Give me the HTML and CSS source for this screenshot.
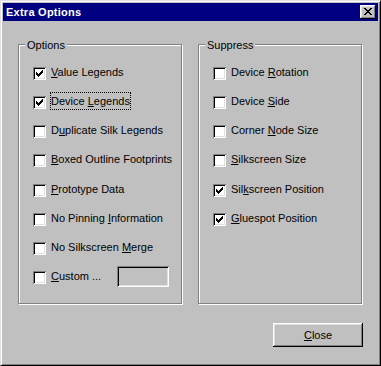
FILE: index.html
```html
<!DOCTYPE html>
<html>
<head>
<meta charset="utf-8">
<link rel="stylesheet" href="styles.css">
</head>
<body>
<div class="window">
  <div class="titlebar">
    <span class="title">Extra Options</span>
    <span class="cap-btn"><svg width="8" height="7" viewBox="0 0 8 7" shape-rendering="crispEdges"><path d="M0 0h2v1h-2z M6 0h2v1h-2z M1 1h2v1h-2z M5 1h2v1h-2z M2 2h4v1h-4z M3 3h2v1h-2z M2 4h4v1h-4z M1 5h2v1h-2z M5 5h2v1h-2z M0 6h2v1h-2z M6 6h2v1h-2z" fill="#000"/></svg></span>
  </div>
  <div class="content">
    <div class="groups">
      <div class="group">
        <div class="group-label">Options</div>
        <div class="rows">
          <div class="row"><span class="cb checked"></span><span class="lbl"><u>V</u>alue Legends</span></div>
          <div class="row"><span class="cb checked"></span><span class="lbl focus">Device <u>L</u>egends</span></div>
          <div class="row"><span class="cb"></span><span class="lbl">D<u>u</u>plicate Silk Legends</span></div>
          <div class="row"><span class="cb"></span><span class="lbl"><u>B</u>oxed Outline Footprints</span></div>
          <div class="row"><span class="cb"></span><span class="lbl"><u>P</u>rototype Data</span></div>
          <div class="row"><span class="cb"></span><span class="lbl">No Pinning <u>I</u>nformation</span></div>
          <div class="row"><span class="cb"></span><span class="lbl">No Silkscreen <u>M</u>erge</span></div>
          <div class="row"><span class="cb"></span><span class="lbl custom-lbl"><u>C</u>ustom ...</span><span class="field"></span></div>
        </div>
      </div>
      <div class="group">
        <div class="group-label">Suppress</div>
        <div class="rows">
          <div class="row"><span class="cb"></span><span class="lbl">Device <u>R</u>otation</span></div>
          <div class="row"><span class="cb"></span><span class="lbl">Device <u>S</u>ide</span></div>
          <div class="row"><span class="cb"></span><span class="lbl">Corner <u>N</u>ode Size</span></div>
          <div class="row"><span class="cb"></span><span class="lbl"><u>S</u>ilkscreen Size</span></div>
          <div class="row"><span class="cb checked"></span><span class="lbl">Sil<u>k</u>screen Position</span></div>
          <div class="row"><span class="cb checked"></span><span class="lbl"><u>G</u>luespot Position</span></div>
        </div>
      </div>
    </div>
    <div class="actions">
      <span class="btn"><u>C</u>lose</span>
    </div>
  </div>
</div>
</body>
</html>
```
FILE: styles.css
```css
html, body {
  margin: 0;
  padding: 0;
  background: #c0c0c0;
}
body {
  font-family: "Liberation Sans", Arial, sans-serif;
  font-size: 11px;
  color: #000;
}
.window {
  box-sizing: border-box;
  width: 381px;
  height: 366px;
  background: #c0c0c0;
  border-top: 1px solid #dfdfdf;
  border-left: 1px solid #dfdfdf;
  border-right: 1px solid #000;
  border-bottom: 1px solid #000;
  box-shadow: inset 1px 1px 0 #fff, inset -1px -1px 0 #808080;
  padding: 2px;
  display: flex;
  flex-direction: column;
}
.titlebar {
  height: 18px;
  background: #000080;
  display: flex;
  align-items: center;
  justify-content: space-between;
  padding-left: 3px;
}
.title {
  color: #fff;
  font-weight: bold;
  font-size: 11px;
  line-height: 18px;
  letter-spacing: 0.25px;
}
.cap-btn {
  box-sizing: border-box;
  width: 16px;
  height: 14px;
  margin-right: 2px;
  background: #c0c0c0;
  box-shadow: inset -1px -1px 0 #000, inset 1px 1px 0 #fff, inset -2px -2px 0 #808080, inset 2px 2px 0 #dfdfdf;
  display: flex;
  align-items: flex-start;
  padding: 3px 0 0 4px;
}
.cap-btn svg { display: block; }
.content {
  flex: 1;
  padding: 23px 15px 0 15px;
  display: flex;
  flex-direction: column;
}
.groups {
  display: flex;
  gap: 16px;
}
.group {
  box-sizing: border-box;
  width: 164px;
  height: 260px;
  border: 1px solid #808080;
  box-shadow: inset 1px 1px 0 #fff, 1px 1px 0 #fff;
}
.group-label {
  width: fit-content;
  margin: -7px 0 0 6px;
  padding: 0 2px;
  background: #c0c0c0;
  line-height: 14px;
}
.rows {
  padding: 7px 0 0 14px;
}
.row {
  height: 29.15px;
  display: flex;
  align-items: center;
}
.cb {
  box-sizing: border-box;
  width: 13px;
  height: 13px;
  flex: none;
  background: #fff;
  box-shadow: inset 1px 1px 0 #808080, inset -1px -1px 0 #fff, inset 2px 2px 0 #000, inset -2px -2px 0 #dfdfdf;
}
.cb.checked {
  background-color: #fff;
  background-image: url("data:image/svg+xml,%3Csvg xmlns='http://www.w3.org/2000/svg' width='13' height='13' viewBox='0 0 13 13' shape-rendering='crispEdges'%3E%3Cpath transform='translate(3 3)' d='M6 0h1v1h-1z M5 1h2v1h-2z M0 2h1v1h-1z M4 2h3v1h-3z M0 3h2v1h-2z M3 3h3v1h-3z M0 4h5v1h-5z M1 5h3v1h-3z M2 6h1v1h-1z' fill='%23000'/%3E%3C/svg%3E");
  background-repeat: no-repeat;
}
.lbl {
  box-sizing: border-box;
  height: 18px;
  margin: 0 0 3px 4px;
  border: 1px solid transparent;
  line-height: 16px;
  white-space: nowrap;
}
.lbl.focus {
  border: 1px dotted #000;
}
.lbl u {
  text-underline-offset: 1px;
}
.custom-lbl {
  width: 67px;
}
.field {
  box-sizing: border-box;
  width: 52px;
  height: 21px;
  margin-bottom: 2px;
  background: #c0c0c0;
  box-shadow: inset 1px 1px 0 #808080, inset -1px -1px 0 #fff, inset 2px 2px 0 #000, inset -2px -2px 0 #dfdfdf;
}
.actions {
  display: flex;
  justify-content: flex-end;
  padding-top: 19px;
}
.btn {
  box-sizing: border-box;
  width: 90px;
  height: 24px;
  background: #c0c0c0;
  box-shadow: inset -1px -1px 0 #000, inset 1px 1px 0 #fff, inset -2px -2px 0 #808080, inset 2px 2px 0 #dfdfdf;
  display: flex;
  align-items: center;
  justify-content: center;
  line-height: 14px;
}
.btn u {
  text-underline-offset: 1px;
}
```
